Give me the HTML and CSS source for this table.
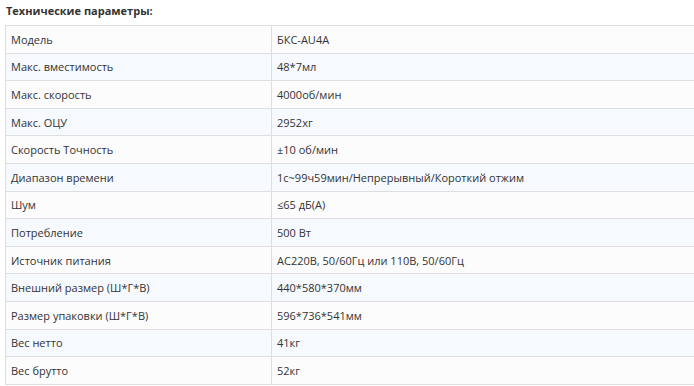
FILE: index.html
```html
<!DOCTYPE html>
<html>
<head>
    <meta charset="UTF-8">
    <title>Технические параметры</title>
    <link rel="stylesheet" href="styles.css">
</head>
<body>
    <div class="specs">
        <h3 class="specs-title">Технические параметры:</h3>
        <table class="specs-table">
            <tr><td>Модель</td><td>БКС-AU4A</td></tr>
            <tr><td>Макс. вместимость</td><td>48*7мл</td></tr>
            <tr><td>Макс. скорость</td><td>4000об/мин</td></tr>
            <tr><td>Макс. ОЦУ</td><td>2952хг</td></tr>
            <tr><td>Скорость Точность</td><td>±10 об/мин</td></tr>
            <tr><td>Диапазон времени</td><td>1с~99ч59мин/Непрерывный/Короткий отжим</td></tr>
            <tr><td>Шум</td><td>≤65 дБ(А)</td></tr>
            <tr><td>Потребление</td><td>500 Вт</td></tr>
            <tr><td>Источник питания</td><td>AC220В, 50/60Гц или 110В, 50/60Гц</td></tr>
            <tr><td>Внешний размер (Ш*Г*В)</td><td>440*580*370мм</td></tr>
            <tr><td>Размер упаковки (Ш*Г*В)</td><td>596*736*541мм</td></tr>
            <tr><td>Вес нетто</td><td>41кг</td></tr>
            <tr><td>Вес брутто</td><td>52кг</td></tr>
        </table>
    </div>
</body>
</html>
```

FILE: styles.css
```css
body {
    margin: 0;
    font-family: 'Open Sans', 'Noto Sans', sans-serif;
    font-size: 11px;
    color: #333;
    background-color: #fff;
    overflow: hidden;
}
.specs {
    padding: 3px 0 0 5px;
}
.specs-title {
    margin: 0 0 0 1px;
    font-size: 11px;
    font-weight: bold;
    line-height: 16px;
    height: 22px;
}
.specs-table {
    width: 100%;
    border-collapse: collapse;
}
.specs-table td {
    height: 26.6px;
    padding: 0 5px;
    border: 1px solid #dedede;
    vertical-align: middle;
}
.specs-table td:first-child {
    width: 255px;
}
.specs-table td:last-child {
    border-right: none;
}
.specs-table tr:nth-child(odd) {
    background-color: #fcfcfc;
}
.specs-table tr:nth-child(even) {
    background-color: #f6f9fd;
}
```
